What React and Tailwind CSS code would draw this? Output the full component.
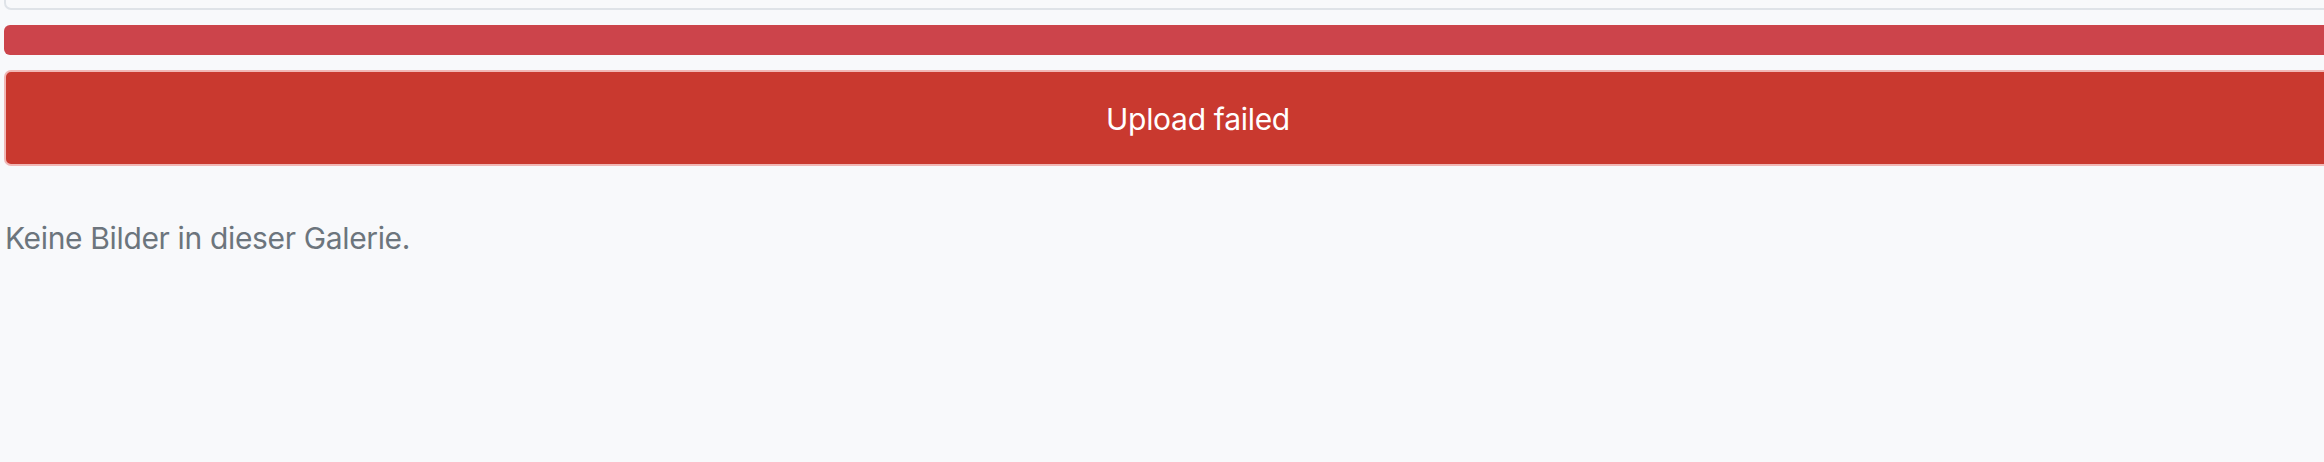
import React from 'react';

export default function App() {
  return (
    <div className="h-[462px] w-full overflow-hidden bg-[#f8f9fb]" style={{ fontFamily: 'Inter, "Noto Sans", sans-serif' }}>
      <div className="w-[2392px] pl-[4px]">
        {/* upload card (scrolled above) */}
        <div className="-mt-[30px] h-[40px] rounded-[7px] border-2 border-[#dfe3e8] bg-[#f8f9fb]" />

        {/* progress bar */}
        <div className="mt-[15px] h-[30px] rounded-[6px] bg-[#cc444b]" />

        {/* status button */}
        <button className="mt-[15px] flex h-[96px] w-full items-center justify-center rounded-[7px] border-2 border-[#f1b7b5] bg-[#c9392f] pt-[3px] text-[30px] tracking-[-0.3px] text-white">
          Upload failed
        </button>

        <p className="mt-[50px] pl-[1px] text-[30px] leading-[45px] tracking-[-0.35px] text-[#6c757d]">Keine Bilder in dieser Galerie.</p>
      </div>
    </div>
  );
}
